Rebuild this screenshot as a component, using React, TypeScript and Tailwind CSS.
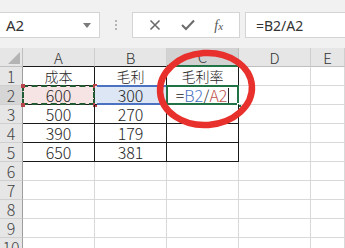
import type { ReactNode } from 'react'

const COLS = ['A', 'B', 'C', 'D', 'E']
const DATA: [string, string][] = [
  ['成本', '毛利'],
  ['600', '300'],
  ['500', '270'],
  ['390', '179'],
  ['650', '381'],
]

const cellFont = { fontFamily: '"Noto Sans CJK SC", "Noto Sans", sans-serif' }

function Cell({ dark, children, className = '' }: { dark?: boolean; children?: ReactNode; className?: string }) {
  return (
    <div
      className={`relative flex items-center justify-center h-[19px] border-r border-b text-[16px] leading-none font-light text-[#262626] ${
        dark ? 'border-[#1a1a1a]' : 'border-[#d9d9d9]'
      } ${className}`}
      style={cellFont}
    >
      {children}
    </div>
  )
}

function FormulaBar() {
  return (
    <div className="h-[48px] bg-[#f1f1f1] flex items-start pt-[12px]" style={{ fontFamily: '"Noto Sans", "Open Sans", sans-serif' }}>
      <div className="w-[100px] h-[26px] bg-white border border-[#d4d4d4] border-l-0 flex items-center justify-between pl-[6px] pr-[8px]">
        <span className="text-[15px] text-[#333]">A2</span>
        <svg width="8" height="5" viewBox="0 0 8 5">
          <path d="M0 0 L8 0 L4 5 Z" fill="#7a7a7a" />
        </svg>
      </div>
      <div className="w-[32px] h-[26px] flex flex-col items-center justify-center gap-[2px]">
        <span className="w-[2px] h-[2px] bg-[#b5b5b5]" />
        <span className="w-[2px] h-[2px] bg-[#b5b5b5]" />
        <span className="w-[2px] h-[2px] bg-[#b5b5b5]" />
      </div>
      <div className="w-[108px] h-[26px] bg-white border border-[#d4d4d4] flex items-center justify-around px-[6px]">
        <svg width="12" height="12" viewBox="0 0 12 12">
          <path d="M1.5 1.5 L10.5 10.5 M10.5 1.5 L1.5 10.5" stroke="#6b6b6b" strokeWidth="1.6" />
        </svg>
        <svg width="14" height="12" viewBox="0 0 14 12">
          <path d="M1 6 L5 10 L13 1.5" stroke="#6b6b6b" strokeWidth="2" fill="none" />
        </svg>
        <span className="text-[14px] italic text-[#555]" style={{ fontFamily: '"Liberation Serif", serif' }}>
          f<span className="text-[11px]">x</span>
        </span>
      </div>
      <div className="flex-1 ml-[5px] h-[26px] bg-white border border-[#d4d4d4] border-r-0 flex items-center pl-[10px]">
        <span className="text-[14px] text-[#333]">=B2/A2</span>
      </div>
    </div>
  )
}

export default function App() {
  return (
    <div className="relative w-[345px] h-[248px] overflow-hidden bg-white">
      <FormulaBar />
      <div className="grid grid-cols-[23px_72px_72px_72px_72px_1fr]">
        {/* header row */}
        <div className="relative h-[19px] bg-[#e6e6e6] border-r border-b border-[#bfbfbf]">
          <svg className="absolute right-[2px] bottom-[2px]" width="12" height="12" viewBox="0 0 12 12">
            <path d="M12 0 L12 12 L0 12 Z" fill="#b4b4b4" />
          </svg>
        </div>
        {COLS.map((c) => (
          <div
            key={c}
            className={`h-[19px] flex items-center justify-center text-[15px] leading-none font-light text-[#333] border-r ${
              c === 'C' ? 'bg-[#d2d2d2] border-b-2 border-b-[#217346] border-r-[#bfbfbf]' : 'bg-[#e6e6e6] border-b border-[#1a1a1a] border-r-[#cfcfcf]'
            } ${c === 'D' || c === 'E' ? 'border-b-[#bfbfbf]' : ''}`}
            style={cellFont}
          >
            {c}
          </div>
        ))}

        {Array.from({ length: 10 }).map((_, i) => {
          const r = i + 1
          const row = DATA[i]
          const inTable = r <= 5
          return [
            <div
              key={`h${r}`}
              className={`h-[19px] flex items-center justify-center text-[16px] leading-none font-light text-[#444] border-b border-r border-r-[#9e9e9e] border-b-[#cfcfcf] ${
                r === 2 ? 'bg-[#d6d6d6]' : 'bg-[#e6e6e6]'
              }`}
              style={cellFont}
            >
              {r}
            </div>,
            <Cell key={`a${r}`} dark={inTable} className={r === 2 ? 'bg-[#f6e4e4]' : ''}>
              <span className={r === 1 ? 'text-[14px]' : ''}>{row?.[0]}</span>
              {r === 2 && (
                <>
                  <div className="absolute -left-px -top-px -right-px -bottom-px border-2 border-dashed border-[#1f5a32]" />
                  <span className="absolute -left-[2px] -top-[2px] w-[4px] h-[4px] bg-[#b8434a]" />
                  <span className="absolute -right-[3px] -top-[2px] w-[4px] h-[4px] bg-[#b8434a]" />
                  <span className="absolute -left-[2px] -bottom-[3px] w-[4px] h-[4px] bg-[#b8434a]" />
                  <span className="absolute -right-[3px] -bottom-[3px] w-[4px] h-[4px] bg-[#b8434a]" />
                </>
              )}
            </Cell>,
            <Cell key={`b${r}`} dark={inTable} className={r === 2 ? 'bg-[#dce6f4]' : ''}>
              <span className={r === 1 ? 'text-[14px]' : ''}>{row?.[1]}</span>
              {r === 2 && (
                <div className="absolute left-[2px] -top-px -right-px -bottom-px border-t-2 border-b-2 border-[#4a72c0]" />
              )}
            </Cell>,
            <Cell key={`c${r}`} dark={inTable}>
              {r === 1 && <span className="text-[14px]">毛利率</span>}
              {r === 2 && (
                <>
                  <div className="absolute -left-px -top-px -right-px -bottom-px border-2 border-[#217346]" />
                  <span className="absolute -right-[4px] -bottom-[4px] w-[5px] h-[5px] bg-[#217346] border border-white" />
                  <span className="flex items-center">
                    <span>=</span>
                    <span className="text-[#4a72c0]">B2</span>
                    <span>/</span>
                    <span className="text-[#c0504d]">A2</span>
                    <span className="ml-px w-px h-[15px] bg-[#222]" />
                  </span>
                </>
              )}
            </Cell>,
            <Cell key={`d${r}`} />,
            <Cell key={`e${r}`} />,
          ]
        })}
      </div>

      {/* hand-drawn annotation circle */}
      <svg className="absolute left-0 top-0 pointer-events-none" width="345" height="248" viewBox="0 0 345 248">
        <ellipse
          cx="206"
          cy="89"
          rx="46"
          ry="36"
          fill="none"
          stroke="#e8302c"
          strokeWidth="6.5"
          transform="rotate(-4 206 89)"
        />
      </svg>
    </div>
  )
}
